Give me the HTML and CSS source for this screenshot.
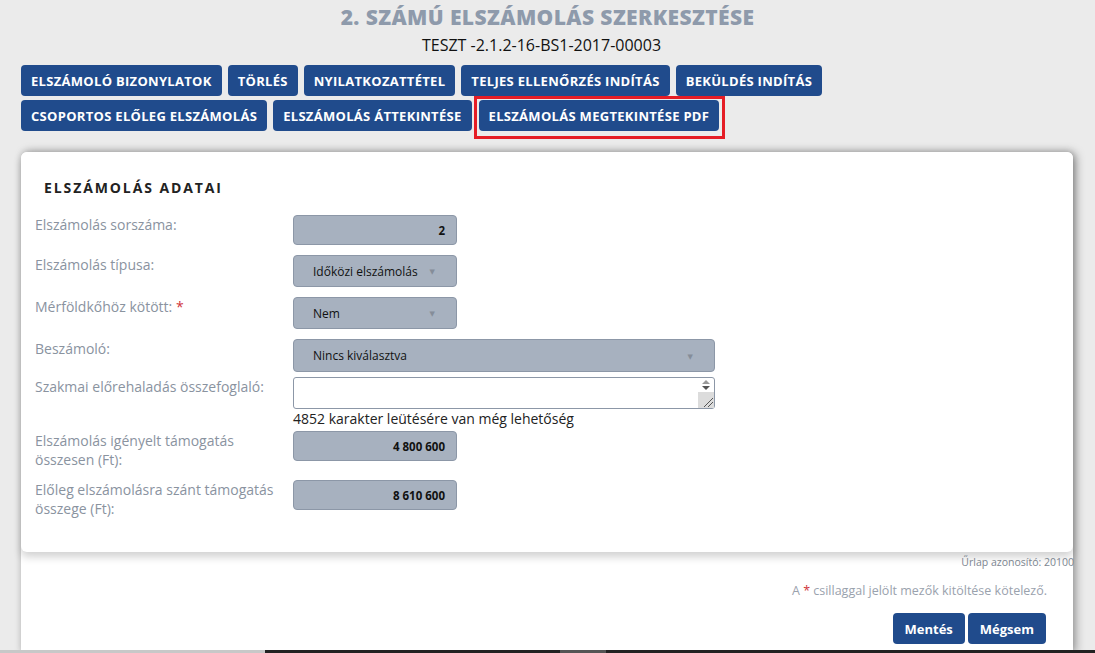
FILE: index.html
```html
<!DOCTYPE html>
<html lang="hu">
<head>
<meta charset="utf-8">
<title>2. számú elszámolás szerkesztése</title>
<link rel="stylesheet" href="styles.css">
</head>
<body>
<header class="page-head">
  <h1 class="title">2. SZÁMÚ ELSZÁMOLÁS SZERKESZTÉSE</h1>
  <div class="subtitle">TESZT -2.1.2-16-BS1-2017-00003</div>
</header>
<nav class="actions">
  <div class="action-row">
    <button class="btn">ELSZÁMOLÓ BIZONYLATOK</button>
    <button class="btn">TÖRLÉS</button>
    <button class="btn">NYILATKOZATTÉTEL</button>
    <button class="btn">TELJES ELLENŐRZÉS INDÍTÁS</button>
    <button class="btn">BEKÜLDÉS INDÍTÁS</button>
  </div>
  <div class="action-row">
    <button class="btn">CSOPORTOS ELŐLEG ELSZÁMOLÁS</button>
    <button class="btn">ELSZÁMOLÁS ÁTTEKINTÉSE</button>
    <button class="btn btn-marked">ELSZÁMOLÁS MEGTEKINTÉSE PDF</button>
  </div>
</nav>
<main class="panel">
  <section class="card">
    <h2 class="card-title">ELSZÁMOLÁS ADATAI</h2>
    <div class="row row-1">
      <div class="label">Elszámolás sorszáma:</div>
      <div class="field field-num">2</div>
    </div>
    <div class="row row-2">
      <div class="label">Elszámolás típusa:</div>
      <div class="field field-select">Időközi elszámolás<span class="caret">▼</span></div>
    </div>
    <div class="row row-3">
      <div class="label">Mérföldkőhöz kötött: <span class="req">*</span></div>
      <div class="field field-select">Nem<span class="caret">▼</span></div>
    </div>
    <div class="row row-4">
      <div class="label">Beszámoló:</div>
      <div class="field field-select field-wide">Nincs kiválasztva<span class="caret">▼</span></div>
    </div>
    <div class="row row-5">
      <div class="label">Szakmai előrehaladás összefoglaló:</div>
      <div class="textarea-wrap">
        <div class="textarea">
          <div class="ta-scroll">
            <div class="ta-arrows"><span class="ta-up"></span><span class="ta-down"></span></div>
            <div class="ta-grip">
              <svg width="14" height="14" viewBox="0 0 14 14"><path d="M4 13 L13 4 M8 13 L13 8" stroke="#555" stroke-width="1" fill="none"/></svg>
            </div>
          </div>
        </div>
        <div class="hint">4852 karakter leütésére van még lehetőség</div>
      </div>
    </div>
    <div class="row row-6">
      <div class="label">Elszámolás igényelt támogatás összesen (Ft):</div>
      <div class="field field-num">4 800 600</div>
    </div>
    <div class="row row-7">
      <div class="label">Előleg elszámolásra szánt támogatás összege (Ft):</div>
      <div class="field field-num">8 610 600</div>
    </div>
  </section>
  <div class="form-id">Űrlap azonosító: 20100</div>
  <div class="legend">A <span class="req">*</span> csillaggal jelölt mezők kitöltése kötelező.</div>
  <div class="footer-actions">
    <button class="btn btn-case">Mentés</button>
    <button class="btn btn-case">Mégsem</button>
  </div>
</main>
<div class="bottom-bar"><span class="bb-light"></span><span class="bb-dark"><span class="bb-thumb"></span></span></div>
</body>
</html>
```
FILE: styles.css
```css
* { box-sizing: border-box; }
html, body { margin: 0; padding: 0; }
body {
  background: #ebebeb;
  font-family: "Open Sans", "DejaVu Sans", sans-serif;
  width: 1095px;
  height: 653px;
  overflow: hidden;
  position: relative;
}
.page-head { text-align: center; }
.title {
  margin: 5px 0 0;
  font-size: 21px;
  line-height: 24px;
  font-weight: 800;
  color: #8e9aab;
  letter-spacing: 0.4px;
}
.subtitle {
  margin-top: 6px;
  padding-right: 12px;
  font-size: 16px;
  line-height: 20px;
  color: #111;
}
.actions {
  margin-top: 10px;
  padding-left: 21px;
  display: flex;
  flex-direction: column;
  gap: 4px;
}
.action-row { display: flex; gap: 6px; }
.btn {
  height: 31px;
  padding: 0 10px;
  border: none;
  border-radius: 4px;
  background: #204b8c;
  color: #fff;
  font-family: "Open Sans", "DejaVu Sans", sans-serif;
  font-weight: 700;
  font-size: 13px;
  letter-spacing: 0.3px;
  cursor: pointer;
}
.btn-marked {
  position: relative;
  margin-left: 1px;
}
.btn-marked::after {
  content: "";
  position: absolute;
  left: -5px;
  right: -6px;
  top: -4px;
  bottom: -8px;
  border: 3px solid #e51d25;
  pointer-events: none;
}
.panel {
  margin: 21px 22px 0 21px;
  background: #fff;
  height: 501px;
  border-radius: 6px 6px 0 0;
  box-shadow: 3px 0 10px rgba(0,0,0,0.35), 0 -2px 6px rgba(0,0,0,0.08);
}
.card {
  background: #fff;
  border-radius: 6px;
  padding: 26px 14px 34px;
  box-shadow: 0 5px 8px rgba(0,0,0,0.18);
}
.card-title {
  margin: 0 0 17px 9px;
  font-size: 14px;
  line-height: 20px;
  font-weight: 700;
  letter-spacing: 1.9px;
  color: #222;
}
.row { display: flex; align-items: flex-start; }
.label {
  width: 258px;
  flex: none;
  font-size: 14px;
  line-height: 19px;
  color: #8a939f;
  padding-right: 14px;
}
.row-1, .row-2, .row-3 { margin-bottom: 10px; }
.row-4 { margin-bottom: 5px; }
.row-5 { margin-bottom: 2px; }
.row-6 { margin-bottom: 11px; }
.req { color: #d0353b; }
.field {
  width: 164px;
  height: 30px;
  background: #a7b1bf;
  border: 1px solid #8c97a7;
  border-radius: 4px;
  display: flex;
  align-items: center;
  font-size: 12px;
  color: #111;
}
.field-num {
  justify-content: flex-end;
  padding-right: 11px;
  font-weight: 700;
  font-size: 11.5px;
}
.field-select {
  height: 32px;
  padding-left: 19px;
  position: relative;
}
.row-4 .field-select { height: 33px; }
.field-wide { width: 422px; }
.caret {
  position: absolute;
  right: 21px;
  top: 50%;
  transform: translateY(-50%);
  font-size: 7px;
  color: #858d99;
}
.textarea-wrap { display: flex; flex-direction: column; }
.textarea {
  width: 422px;
  height: 32px;
  background: #fff;
  border: 1px solid #8c97a7;
  border-radius: 3px;
  display: flex;
  justify-content: flex-end;
}
.ta-scroll {
  width: 16px;
  display: flex;
  flex-direction: column;
}
.ta-arrows {
  height: 14px;
  display: flex;
  flex-direction: column;
  align-items: center;
  justify-content: center;
  gap: 2px;
}
.ta-up, .ta-down {
  width: 0; height: 0;
  border-left: 4px solid transparent;
  border-right: 4px solid transparent;
}
.ta-up { border-bottom: 4px solid #999; }
.ta-down { border-top: 4px solid #555; }
.ta-grip {
  flex: 1;
  background: #dcdcdc;
  display: flex;
  align-items: flex-end;
  justify-content: flex-end;
}
.ta-grip svg { display: block; }
.hint {
  font-size: 14px;
  line-height: 20px;
  color: #222;
  margin-top: 0;
}
.form-id {
  text-align: right;
  font-size: 10.5px;
  line-height: 14px;
  color: #7c8590;
  margin-top: 3px;
  margin-right: -1px;
}
.legend {
  text-align: right;
  font-size: 12.5px;
  line-height: 18px;
  color: #9aa2ad;
  margin-top: 13px;
  margin-right: 26px;
}
.footer-actions {
  display: flex;
  justify-content: flex-end;
  gap: 3px;
  margin-top: 13px;
  margin-right: 27px;
}
.btn-case { height: 31px; padding: 0 12px; font-size: 13px; letter-spacing: 0; }
.bottom-bar {
  position: absolute;
  left: 0; right: 0; bottom: 0;
  height: 3px;
  display: flex;
}
.bb-light { width: 265px; background: #c8c8c8; }
.bb-dark { flex: 1; background: #222; position: relative; }
.bb-thumb { position: absolute; left: 295px; width: 46px; top: 0; bottom: 0; background: #555; }
```
